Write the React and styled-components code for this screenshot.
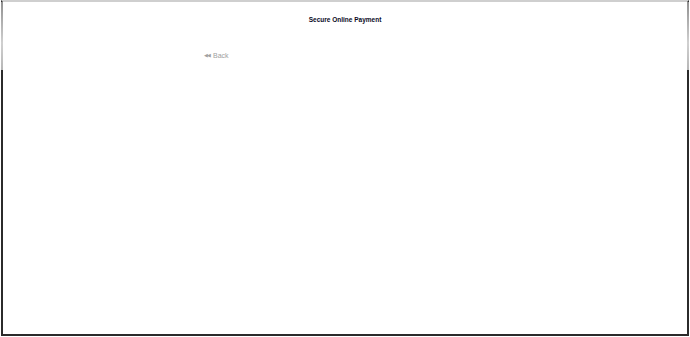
import React from "react";
import styled, { createGlobalStyle } from "styled-components";

const GlobalStyle = createGlobalStyle`
	html, body {
		margin: 0;
		padding: 0;
		height: 100%;
		background: #fff;
	}
	#root {
		height: 100%;
	}
`;

const Frame = styled.div`
	box-sizing: border-box;
	height: 336px;
	border-left: 2px solid #2b2b2b;
	border-right: 2px solid #2b2b2b;
	border-bottom: 2px solid #2b2b2b;
	border-top: 2px solid #cfcfcf;
	margin-left: 1px;
	margin-right: 1px;
	font-family: "Liberation Sans", Arial, sans-serif;
	display: flex;
	flex-direction: column;
`;

const Header = styled.header`
	height: 68px;
	margin: 0 -2px;
	border-left: 2px solid transparent;
	border-right: 2px solid transparent;
	border-image: linear-gradient(to bottom, #8f8f8f, #d0d0d0 60%, #b5b5b5) 1;
	display: flex;
	flex-direction: column;
	align-items: center;
`;

const Title = styled.h1`
	margin: 14px 0 0;
	font-size: 6.5px;
	font-weight: bold;
	color: #0a0a24;
`;

const BackRow = styled.div`
	align-self: stretch;
	padding: 20px 0 0 201px;
`;

const BackLink = styled.a`
	font-size: 7px;
	color: #a0a0a0;
	text-decoration: none;
	display: inline-flex;
	align-items: center;
	gap: 3px;
`;

const BackIcon = styled.span`
	font-size: 5px;
	letter-spacing: -1px;
`;

export default function App() {
	return (
		<>
			<GlobalStyle />
			<Frame>
				<Header>
					<Title>Secure Online Payment</Title>
					<BackRow>
						<BackLink href="#">
							<BackIcon>◀◀</BackIcon>Back
						</BackLink>
					</BackRow>
				</Header>
			</Frame>
		</>
	);
}
